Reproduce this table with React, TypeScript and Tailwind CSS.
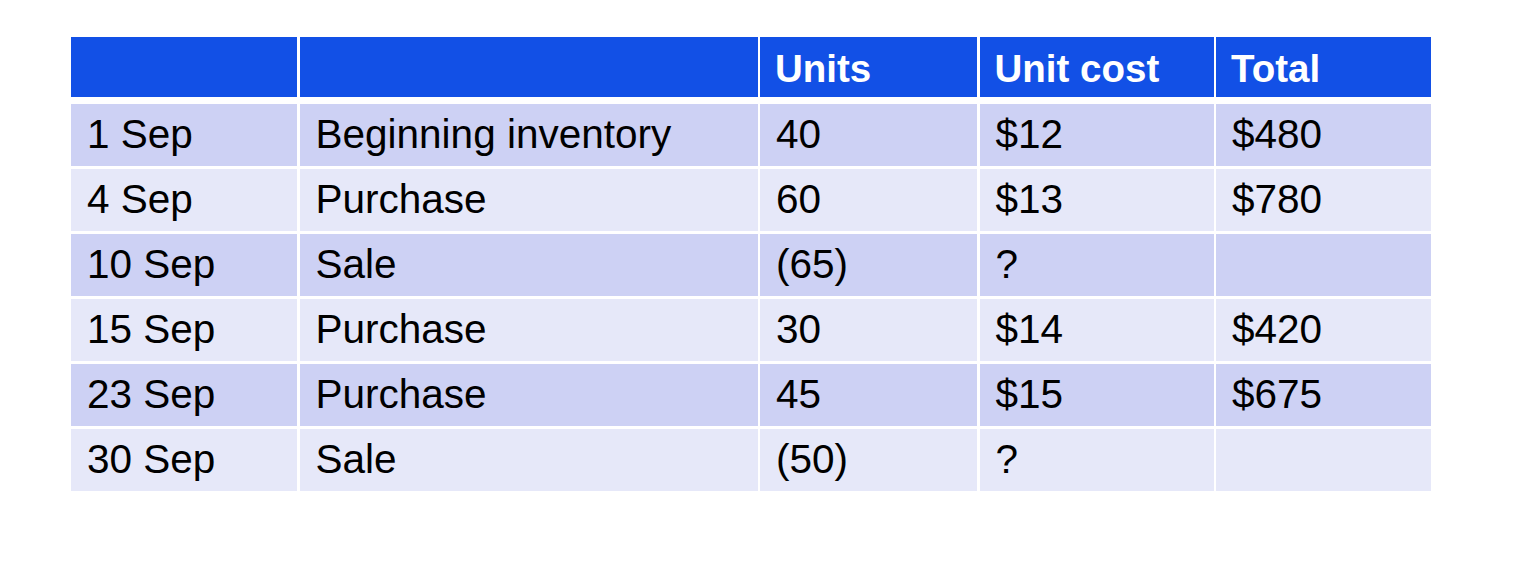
const header = ["", "", "Units", "Unit cost", "Total"];

const rows = [
  ["1 Sep", "Beginning inventory", "40", "$12", "$480"],
  ["4 Sep", "Purchase", "60", "$13", "$780"],
  ["10 Sep", "Sale", "(65)", "?", ""],
  ["15 Sep", "Purchase", "30", "$14", "$420"],
  ["23 Sep", "Purchase", "45", "$15", "$675"],
  ["30 Sep", "Sale", "(50)", "?", ""],
];

const cols = "grid grid-cols-[226px_458px_217px_234px_215px] gap-x-[2.5px]";

export default function App() {
  return (
    <div className="w-[1536px] h-[562px] bg-white pt-[37px] pl-[71px] font-['Liberation_Sans',Arial,sans-serif] leading-none">
      <div className="flex flex-col">
        {/* header row */}
        <div className={`${cols} h-[60px]`}>
          {header.map((h, i) => (
            <div key={i} className="bg-[#1250e6] flex items-center pl-[15px] pt-[4px] text-[38.5px] font-bold text-white">
              {h}
            </div>
          ))}
        </div>

        <div className="flex flex-col gap-y-[3px] mt-[6.5px]">
          {rows.map((r, ri) => (
            <div key={ri} className={`${cols} h-[62px]`}>
              {r.map((c, ci) => (
                <div
                  key={ci}
                  className={`flex items-center pl-[16px] text-[40.5px] text-black ${
                    ri % 2 === 0 ? "bg-[#cdd1f4]" : "bg-[#e6e8f9]"
                  }`}
                >
                  {c}
                </div>
              ))}
            </div>
          ))}
        </div>
      </div>
    </div>
  );
}
